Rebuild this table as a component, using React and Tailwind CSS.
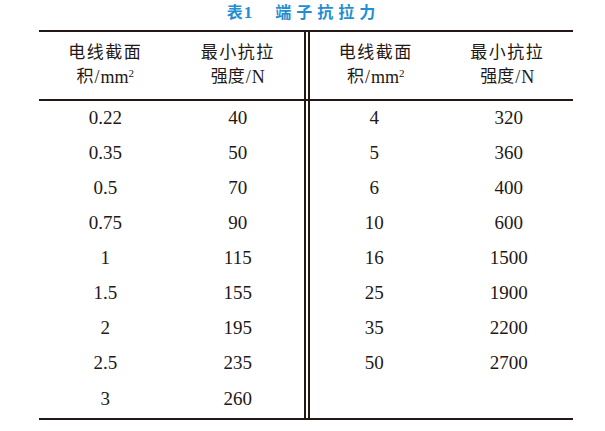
import React from "react";

const left = [
  ["0.22", "40"],
  ["0.35", "50"],
  ["0.5", "70"],
  ["0.75", "90"],
  ["1", "115"],
  ["1.5", "155"],
  ["2", "195"],
  ["2.5", "235"],
  ["3", "260"],
];
const right = [
  ["4", "320"],
  ["5", "360"],
  ["6", "400"],
  ["10", "600"],
  ["16", "1500"],
  ["25", "1900"],
  ["35", "2200"],
  ["50", "2700"],
  ["", ""],
];

const cjk = { fontFamily: '"Liberation Serif", "Noto Sans CJK SC", serif' };
const num = { fontFamily: '"Liberation Serif", serif' };

function HeadCell({ a, b, unit, sup }) {
  return (
    <div className="flex-1 flex flex-col items-center justify-center text-[17px] leading-[24px] text-[#231815]" style={cjk}>
      <div className="tracking-[1.5px]">{a}</div>
      <div className="flex items-start">
        <span>{b}</span>
        <span className="text-[18px] mx-[1px]" style={num}>/</span>
        <span className="text-[18px]" style={num}>{unit}</span>
        {sup && (
          <span className="text-[11px] leading-[11px] mt-[3px]" style={num}>
            {sup}
          </span>
        )}
      </div>
    </div>
  );
}

function Divider() {
  return <div className="w-[6px] shrink-0 border-l-2 border-r-2 border-[#231815] self-stretch" />;
}

export default function App() {
  return (
    <div className="w-[605px] h-[431px] bg-white overflow-hidden">
      <div
        className="h-[30px] flex justify-center pt-[1px] text-[16px] font-bold text-[#1f8fd2] leading-[20px]"
        style={{ fontFamily: '"Noto Sans CJK SC", sans-serif' }}
      >
        <span className="ml-[2px] tracking-[1px]">
          表<span className="text-[17px]" style={num}>1</span>
        </span>
        <span className="ml-[22px] tracking-[5px]">端子抗拉力</span>
      </div>
      <div className="ml-[39px] w-[534px] border-t-2 border-b-2 border-[#231815]">
        <div className="flex h-[69px] border-b-2 border-[#231815]">
          <div className="w-[265px] flex pb-[2px]">
            <HeadCell a="电线截面" b="积" unit="mm" sup="2" />
            <HeadCell a="最小抗拉" b="强度" unit="N" />
          </div>
          <Divider />
          <div className="flex-1 flex pb-[2px]">
            <HeadCell a="电线截面" b="积" unit="mm" sup="2" />
            <HeadCell a="最小抗拉" b="强度" unit="N" />
          </div>
        </div>
        {left.map((l, i) => (
          <div key={i} className={"flex " + (i === 8 ? "h-[37px]" : "h-[35px]")}>
            <div className="w-[265px] flex items-center text-[19px] text-[#231815]" style={num}>
              <div className="flex-1 text-center">{l[0]}</div>
              <div className="flex-1 text-center">{l[1]}</div>
            </div>
            <Divider />
            <div className="flex-1 flex items-center text-[19px] text-[#231815]" style={num}>
              <div className="flex-1 text-center pr-[6px]">{right[i][0]}</div>
              <div className="flex-1 text-center">{right[i][1]}</div>
            </div>
          </div>
        ))}
      </div>
    </div>
  );
}
